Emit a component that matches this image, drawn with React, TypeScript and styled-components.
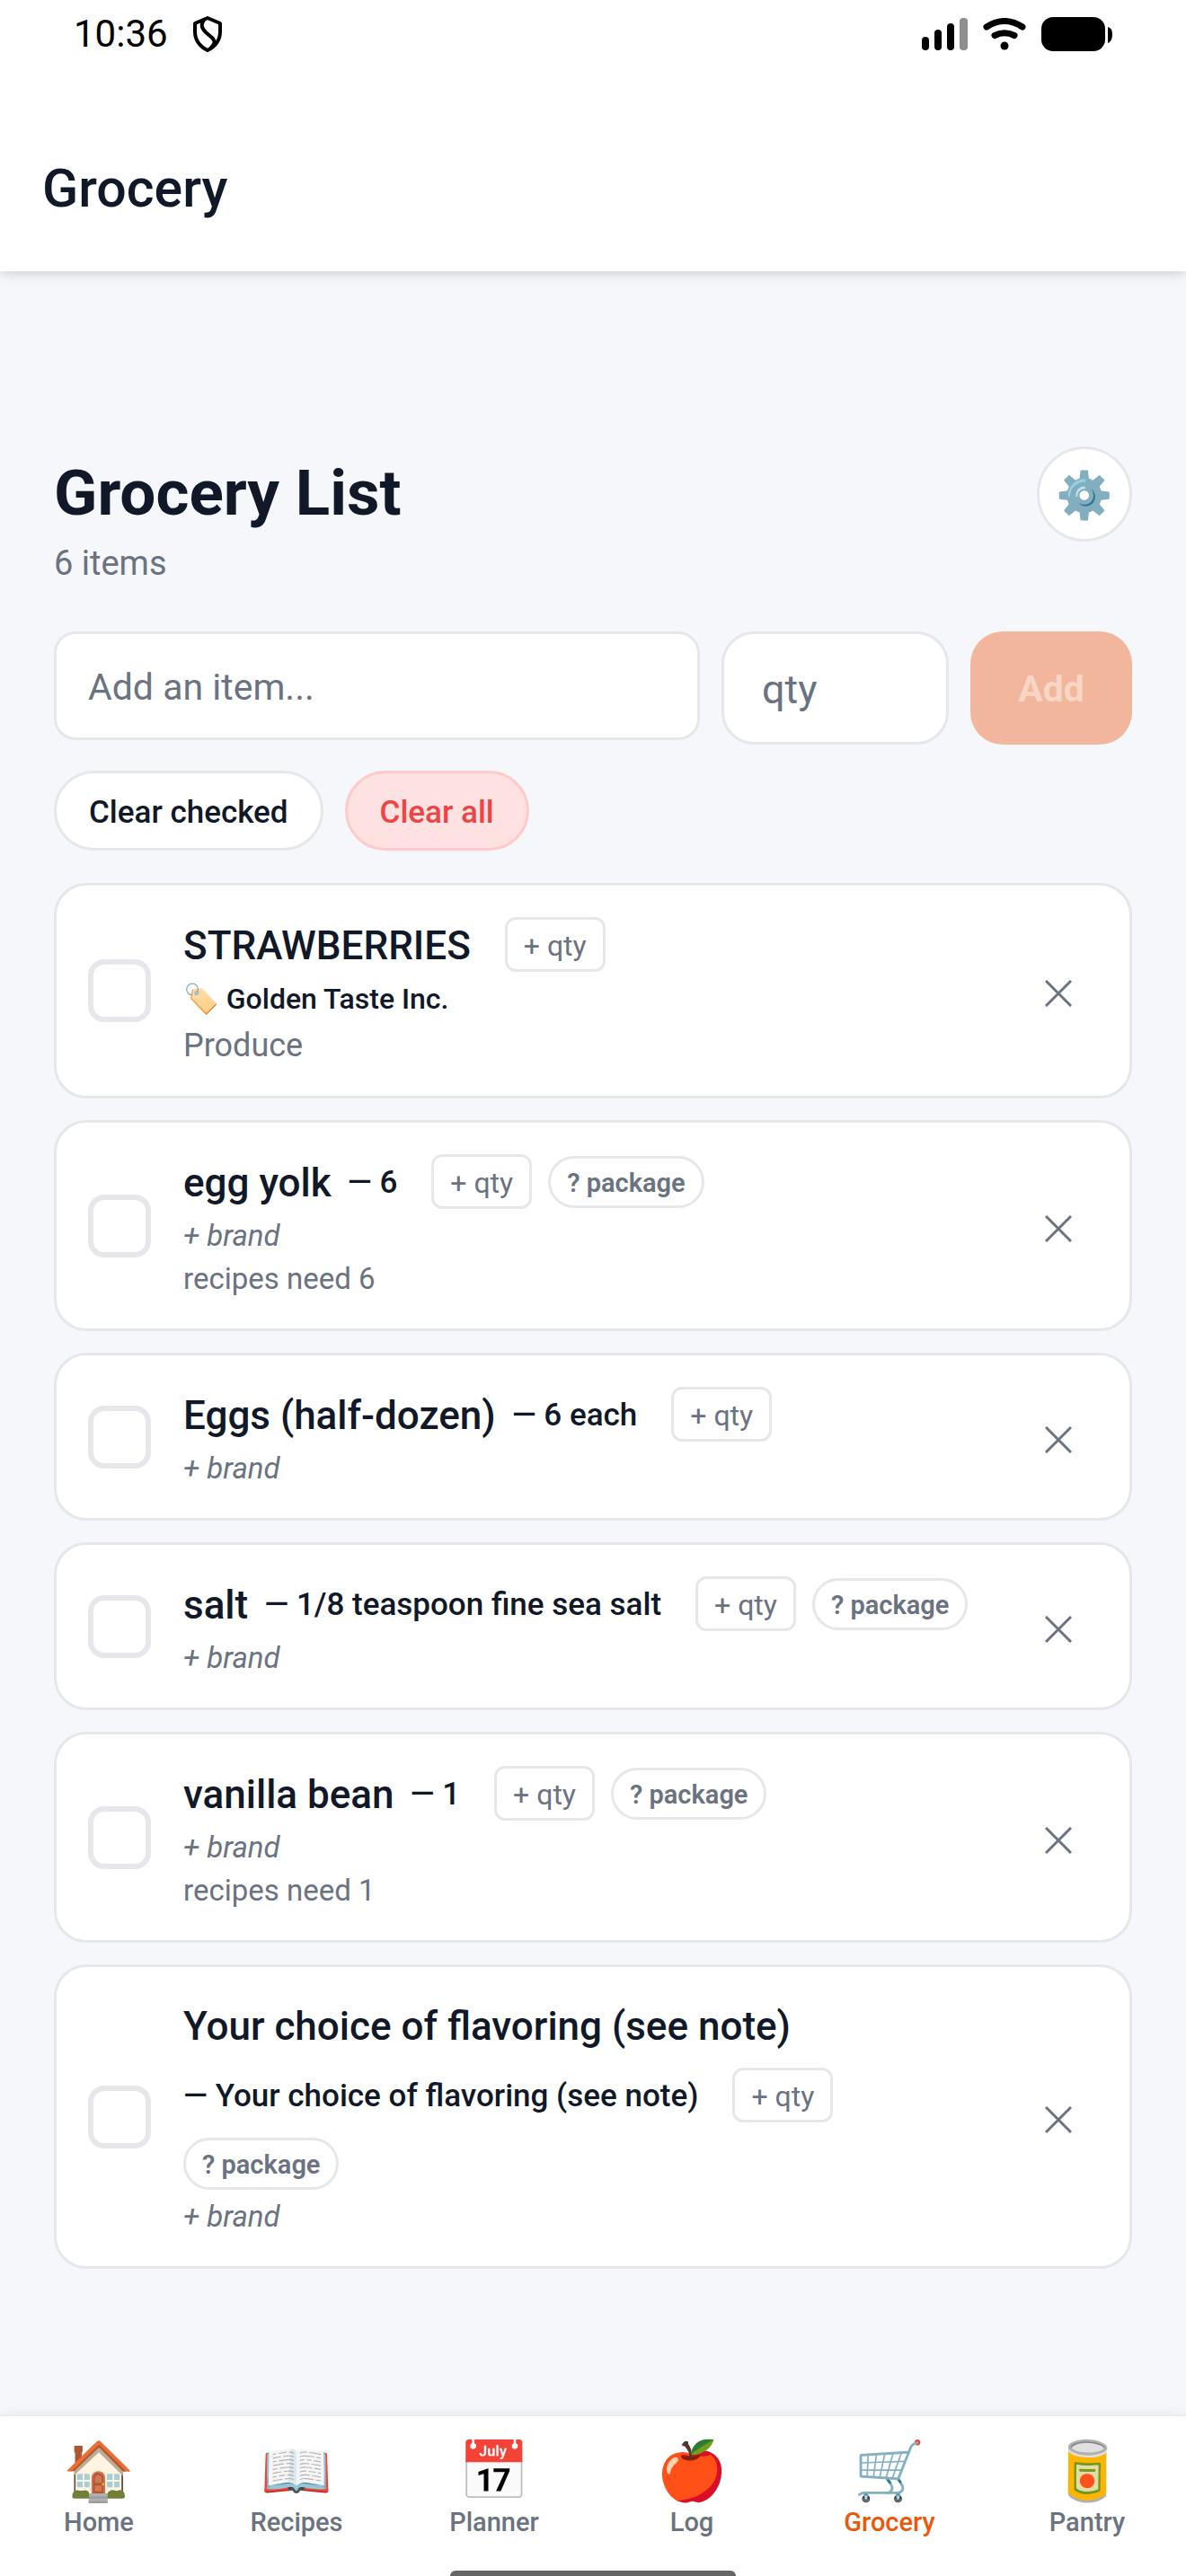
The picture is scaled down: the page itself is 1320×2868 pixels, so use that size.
import React, { useState } from 'react';
import styled, { createGlobalStyle } from 'styled-components';

const ink = '#111827';
const muted = '#6b7280';
const line = '#e5e7eb';
const accent = '#ea580c';
const font = "Roboto, 'Noto Color Emoji', sans-serif";

const GlobalStyle = createGlobalStyle`
  * { box-sizing: border-box; }
  body { margin: 0; background: #f5f7fb; color: ${ink}; font-family: ${font}; }
  button, input { font-family: inherit; margin: 0; }
  h1, h2, p, ul { margin: 0; padding: 0; }
`;

const Screen = styled.div`
  min-height: 100vh;
  display: flex;
  flex-direction: column;
`;

const TopBar = styled.header`
  background: #fff;
  box-shadow: 0 1px 14px rgba(0, 0, 0, 0.2);
`;

const StatusBar = styled.div`
  height: 76px;
  padding: 0 82px;
  display: flex;
  align-items: center;
  justify-content: space-between;
  color: #000;
`;

const StatusGroup = styled.div<{ $gap: number }>`
  display: flex;
  align-items: center;
  gap: ${(p) => p.$gap}px;
`;

const Clock = styled.span`
  font-size: 42px;
  line-height: 48px;
`;

const ScreenTitle = styled.p`
  padding: 98px 47px 56px;
  font-size: 59px;
  line-height: 72px;
  font-weight: 500;
`;

const Main = styled.main`
  flex: 1;
  padding: 195px 60px 60px;
`;

const Heading = styled.div`
  display: flex;
  justify-content: space-between;
  align-items: flex-start;
`;

const HeadingText = styled.div`
  display: flex;
  flex-direction: column;
  gap: 12px;
  padding-top: 10px;
`;

const Title = styled.h1`
  font-size: 71px;
  line-height: 84px;
  font-weight: 700;
`;

const Count = styled.p`
  font-size: 38px;
  line-height: 48px;
  color: ${muted};
`;

const SettingsButton = styled.button`
  width: 106px;
  height: 106px;
  display: flex;
  align-items: center;
  justify-content: center;
  padding: 3px 0 0;
  border: 3px solid ${line};
  border-radius: 50%;
  background: #fff;
  font-size: 51px;
  line-height: 60px;
`;

const AddForm = styled.form`
  display: flex;
  align-items: stretch;
  gap: 24px;
  margin-top: 52px;
`;

const ItemField = styled.input`
  flex: 1;
  min-width: 0;
  height: 121px;
  padding: 3px 35px 0;
  border: 3px solid ${line};
  border-radius: 24px;
  background: #fff;
  color: ${ink};
  font-size: 41px;
  &::placeholder { color: ${muted}; opacity: 1; }
`;

const QtyField = styled.input`
  width: 253px;
  padding: 2px 42px 0;
  border: 3px solid ${line};
  border-radius: 36px;
  background: #fff;
  color: ${ink};
  font-size: 45px;
  &::placeholder { color: ${muted}; opacity: 1; }
`;

const AddButton = styled.button`
  width: 180px;
  height: 126px;
  padding: 2px 0 0;
  border: 0;
  border-radius: 36px;
  background: #f1b69b;
  color: #f8d5c5;
  font-size: 41px;
  font-weight: 700;
`;

const BulkActions = styled.div`
  display: flex;
  gap: 24px;
  margin: 29px 0 36px;
`;

const Pill = styled.button<{ $danger?: boolean }>`
  height: 89px;
  padding: 3px 36px 0;
  border: 3px solid ${(p) => (p.$danger ? '#fecaca' : line)};
  border-radius: 45px;
  background: ${(p) => (p.$danger ? '#fee2e2' : '#fff')};
  color: ${(p) => (p.$danger ? '#ef4444' : ink)};
  font-size: 35px;
  font-weight: 500;
`;

const List = styled.ul`
  list-style: none;
  display: flex;
  flex-direction: column;
  gap: 24px;
`;

const Card = styled.li`
  display: flex;
  align-items: center;
  gap: 36px;
  padding: 35px;
  border: 3px solid ${line};
  border-radius: 36px;
  background: #fff;
`;

const CheckBox = styled.input`
  appearance: none;
  flex: none;
  width: 70px;
  height: 70px;
  margin: 0;
  border: 6px solid ${line};
  border-radius: 18px;
  background: #fff;
  &:checked { background: ${accent}; border-color: ${accent}; }
`;

const Details = styled.div`
  flex: 1;
  min-width: 0;
  display: flex;
  flex-direction: column;
  align-items: flex-start;
`;

const NameRow = styled.div`
  display: flex;
  flex-wrap: wrap;
  align-items: center;
  gap: 17px 18px;
`;

const Name = styled.label`
  padding-top: 2px;
  font-size: 44px;
  line-height: 58px;
  font-weight: 500;
`;

const Amount = styled.span`
  padding-top: 2px;
  font-size: 35px;
  line-height: 48px;
  font-weight: 500;
`;

const QtyChip = styled.button`
  height: 61px;
  margin-left: 20px;
  padding: 2px 18px 0;
  border: 3px solid ${line};
  border-radius: 12px;
  background: #fff;
  color: ${muted};
  font-size: 32px;
`;

const PackageChip = styled.button`
  height: 58px;
  padding: 2px 18px 0;
  border: 3px solid ${line};
  border-radius: 29px;
  background: #fff;
  color: ${muted};
  font-size: 29px;
  font-weight: 600;
`;

const Brand = styled.button<{ $set: boolean }>`
  height: 40px;
  margin-top: 10px;
  padding: 0;
  border: 0;
  background: none;
  color: ${(p) => (p.$set ? ink : muted)};
  font-size: ${(p) => (p.$set ? 32 : 33)}px;
  line-height: 40px;
  font-weight: ${(p) => (p.$set ? 500 : 400)};
  font-style: ${(p) => (p.$set ? 'normal' : 'italic')};
`;

const Need = styled.p`
  margin-top: 8px;
  color: ${muted};
  font-size: 33px;
  line-height: 40px;
`;

const Aisle = styled.p`
  margin-top: 11px;
  color: ${muted};
  font-size: 36px;
  line-height: 42px;
`;

const RemoveButton = styled.button`
  flex: none;
  width: 88px;
  height: 88px;
  display: flex;
  align-items: center;
  justify-content: center;
  padding: 6px 0 0;
  border: 0;
  background: none;
  color: ${muted};
`;

const BottomBar = styled.footer`
  background: #fff;
  border-top: 1px solid ${line};
  box-shadow: 0 -2px 12px rgba(0, 0, 0, 0.06);
`;

const Tabs = styled.nav`
  display: grid;
  grid-template-columns: repeat(6, 1fr);
  padding: 26px 0 36px;
`;

const Tab = styled.a<{ $active: boolean }>`
  display: flex;
  flex-direction: column;
  align-items: center;
  gap: 2px;
  color: ${(p) => (p.$active ? accent : muted)};
  font-size: 29px;
  line-height: 36px;
  font-weight: 500;
  text-decoration: none;
`;

const TabIcon = styled.span`
  font-size: 64px;
  line-height: 72px;
`;

const HomeIndicator = styled.div`
  width: 318px;
  height: 6px;
  margin: 0 auto;
  border-radius: 6px 6px 0 0;
  background: #666;
`;

function ShieldIcon() {
  return (
    <svg width="34" height="42" viewBox="0 0 34 42" fill="none" stroke="#000" strokeWidth="4" strokeLinejoin="round" aria-hidden="true">
      <path d="M17 3 L31 9 V18 C31 28 25 35 17 39 C9 35 3 28 3 18 V9 Z" />
      <path d="M14 4 C9 10 10 14 15 19 L22 25 C26 29 25 32 20 37" />
    </svg>
  );
}

function SignalIcon() {
  return (
    <svg width="51" height="36" viewBox="0 0 51 36" aria-hidden="true">
      <rect x="0" y="21" width="8" height="15" rx="4" />
      <rect x="14" y="13" width="8" height="23" rx="4" />
      <rect x="28" y="6" width="8" height="30" rx="4" />
      <rect x="42" y="0" width="9" height="36" rx="4" fill="#8e8e8e" />
    </svg>
  );
}

function WifiIcon() {
  return (
    <svg width="48" height="36" viewBox="0 0 48 36" fill="none" stroke="#000" strokeWidth="7" strokeLinecap="round" aria-hidden="true">
      <path d="M4 10 Q24 -3 44 10" />
      <path d="M13 19.500 Q24 14 35 19.500" />
      <circle cx="24" cy="31" r="4.500" fill="#000" stroke="none" />
    </svg>
  );
}

function BatteryIcon() {
  return (
    <svg width="79" height="38" viewBox="0 0 79 38" aria-hidden="true">
      <rect x="0" y="0" width="71" height="38" rx="13" />
      <path d="M74 11 Q79 12 79 19 Q79 27 74 29 Z" />
    </svg>
  );
}

function CrossIcon() {
  return (
    <svg width="30" height="30" viewBox="0 0 30 30" fill="none" stroke="currentColor" strokeWidth="3" aria-hidden="true">
      <path d="M1 1 L29 29 M29 1 L1 29" />
    </svg>
  );
}

interface GroceryItem {
  id: string;
  name: string;
  amount?: string;
  needsPackage?: boolean;
  brand?: string;
  need?: string;
  aisle?: string;
}

const groceries: GroceryItem[] = [
  { id: 'strawberries', name: 'STRAWBERRIES', brand: 'Golden Taste Inc.', aisle: 'Produce' },
  { id: 'yolk', name: 'egg yolk', amount: '6', needsPackage: true, need: 'recipes need 6' },
  { id: 'eggs', name: 'Eggs (half-dozen)', amount: '6 each' },
  { id: 'salt', name: 'salt', amount: '1/8 teaspoon fine sea salt', needsPackage: true },
  { id: 'vanilla', name: 'vanilla bean', amount: '1', needsPackage: true, need: 'recipes need 1' },
  {
    id: 'flavoring',
    name: 'Your choice of flavoring (see note)',
    amount: 'Your choice of flavoring (see note)',
    needsPackage: true,
  },
];

const tabs = [
  { icon: '🏠', label: 'Home' },
  { icon: '📖', label: 'Recipes' },
  { icon: '📅', label: 'Planner' },
  { icon: '🍎', label: 'Log' },
  { icon: '🛒', label: 'Grocery' },
  { icon: '🥫', label: 'Pantry' },
];

function GroceryCard({ item }: { item: GroceryItem }) {
  const [checked, setChecked] = useState(false);
  return (
    <Card>
      <CheckBox id={item.id} type="checkbox" checked={checked} onChange={() => setChecked(!checked)} />
      <Details>
        <NameRow>
          <Name htmlFor={item.id}>{item.name}</Name>
          {item.amount && <Amount>— {item.amount}</Amount>}
          <QtyChip type="button">+ qty</QtyChip>
          {item.needsPackage && <PackageChip type="button">? package</PackageChip>}
        </NameRow>
        <Brand type="button" $set={Boolean(item.brand)}>
          {item.brand ? `🏷️ ${item.brand}` : '+ brand'}
        </Brand>
        {item.need && <Need>{item.need}</Need>}
        {item.aisle && <Aisle>{item.aisle}</Aisle>}
      </Details>
      <RemoveButton type="button" aria-label={`Remove ${item.name}`}>
        <CrossIcon />
      </RemoveButton>
    </Card>
  );
}

export default function App() {
  return (
    <Screen>
      <GlobalStyle />
      <TopBar>
        <StatusBar>
          <StatusGroup $gap={27}>
            <Clock>10:36</Clock>
            <ShieldIcon />
          </StatusGroup>
          <StatusGroup $gap={17}>
            <SignalIcon />
            <WifiIcon />
            <BatteryIcon />
          </StatusGroup>
        </StatusBar>
        <ScreenTitle>Grocery</ScreenTitle>
      </TopBar>
      <Main>
        <Heading>
          <HeadingText>
            <Title>Grocery List</Title>
            <Count>{groceries.length} items</Count>
          </HeadingText>
          <SettingsButton type="button" aria-label="Settings">⚙️</SettingsButton>
        </Heading>
        <AddForm onSubmit={(e) => e.preventDefault()}>
          <ItemField type="text" placeholder="Add an item..." aria-label="Item" />
          <QtyField type="text" placeholder="qty" aria-label="Quantity" />
          <AddButton type="submit">Add</AddButton>
        </AddForm>
        <BulkActions>
          <Pill type="button">Clear checked</Pill>
          <Pill type="button" $danger>Clear all</Pill>
        </BulkActions>
        <List>
          {groceries.map((item) => (
            <GroceryCard key={item.id} item={item} />
          ))}
        </List>
      </Main>
      <BottomBar>
        <Tabs>
          {tabs.map((tab) => (
            <Tab key={tab.label} href={`#${tab.label.toLowerCase()}`} $active={tab.label === 'Grocery'}>
              <TabIcon aria-hidden="true">{tab.icon}</TabIcon>
              {tab.label}
            </Tab>
          ))}
        </Tabs>
        <HomeIndicator />
      </BottomBar>
    </Screen>
  );
}
